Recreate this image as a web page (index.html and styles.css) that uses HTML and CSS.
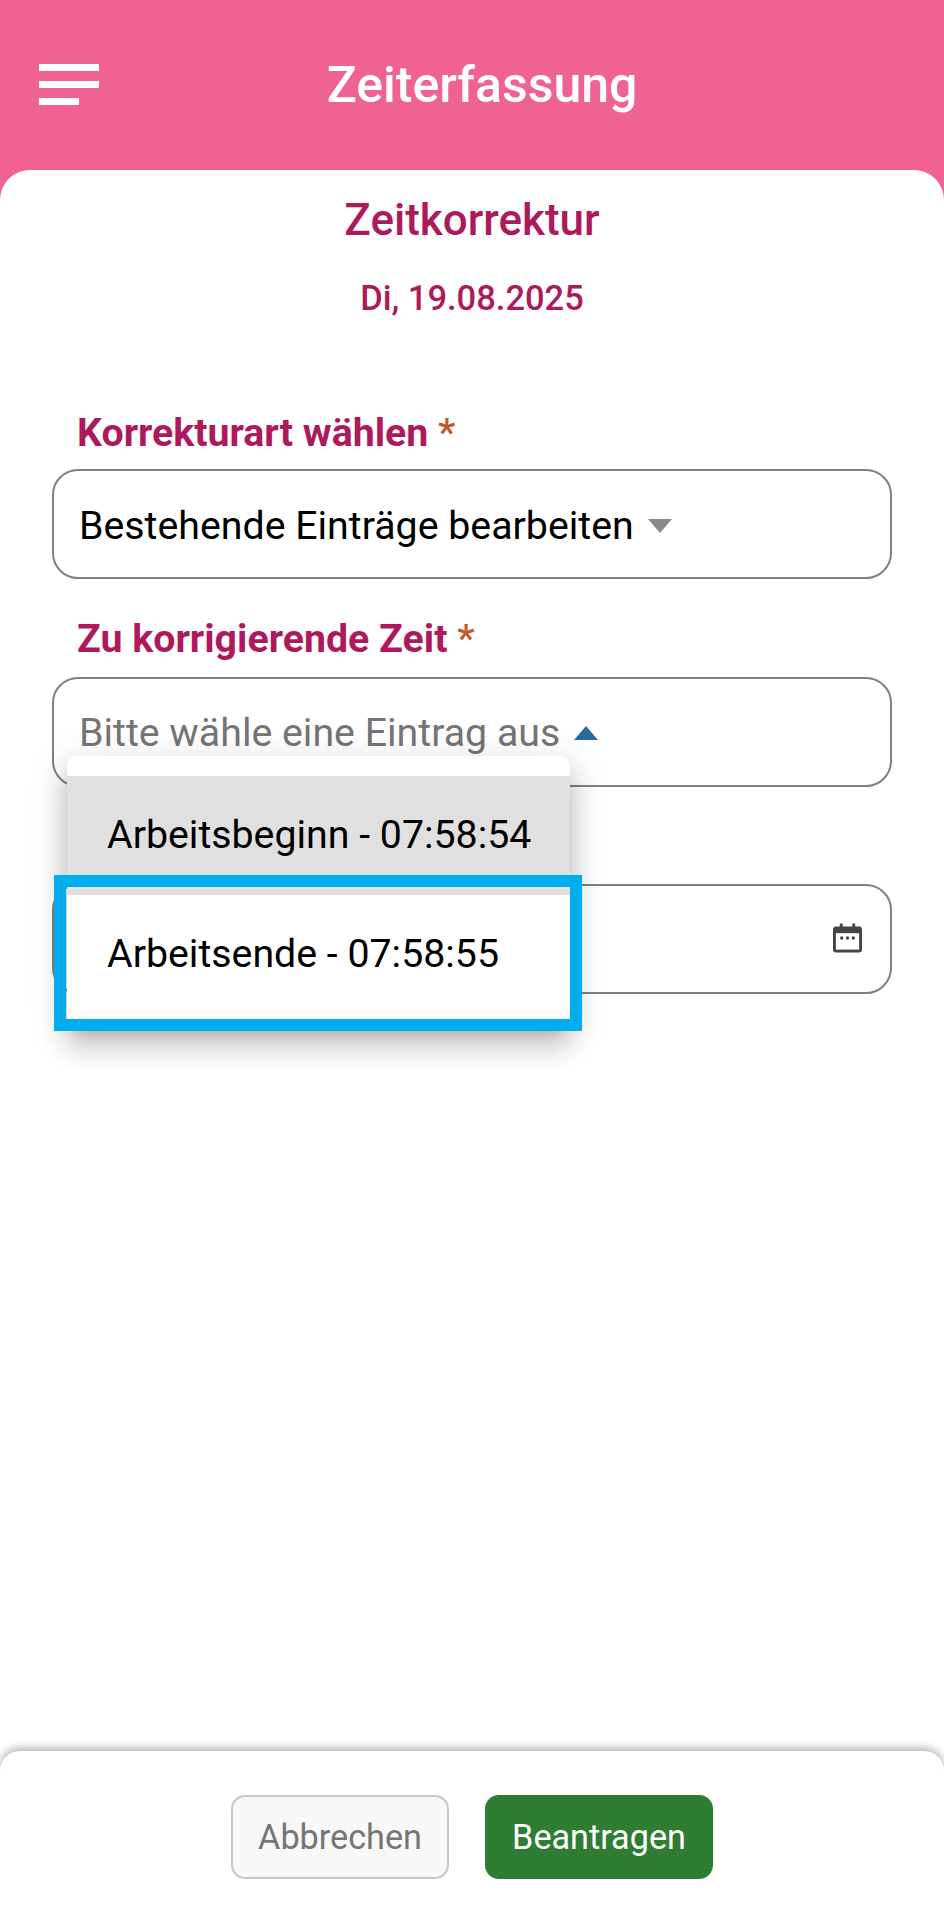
FILE: index.html
```html
<!DOCTYPE html>
<html lang="de">
<head>
<meta charset="utf-8">
<title>Zeiterfassung</title>
<link rel="stylesheet" href="styles.css">
</head>
<body>
<div class="app">
  <header class="topbar">
    <div class="burger"><span class="bar"></span><span class="bar"></span><span class="bar short"></span></div>
    <h1 class="app-title">Zeiterfassung</h1>
  </header>
  <main class="sheet">
    <h2 class="sheet-title">Zeitkorrektur</h2>
    <p class="sheet-date">Di, 19.08.2025</p>
    <form class="form">
      <div class="group">
        <div class="label">Korrekturart wählen <span class="req">*</span></div>
        <div class="field">
          <span class="value">Bestehende Einträge bearbeiten</span>
          <svg class="caret" viewBox="0 0 24 14"><polygon points="0,0 24,0 12,14" fill="#8a8a8a"/></svg>
        </div>
      </div>
      <div class="group">
        <div class="label">Zu korrigierende Zeit <span class="req">*</span></div>
        <div class="field">
          <span class="value placeholder">Bitte wähle eine Eintrag aus</span>
          <svg class="caret caret-open" viewBox="0 0 24 14"><polygon points="0,14 24,14 12,0" fill="#2a6b9c"/></svg>
        </div>
        <div class="menu">
          <div class="menu-item active">Arbeitsbeginn - 07:58:54</div>
          <div class="menu-item">Arbeitsende - 07:58:55</div>
          <div class="highlight"></div>
        </div>
      </div>
      <div class="group no-label">
        <div class="field end">
          <svg class="calendar" viewBox="0 0 30 30">
            <path fill="#444" d="M7 0h3v3h10V0h3v3h3.500A3 3 0 0 1 30 6v21a3 3 0 0 1-3 3H3a3 3 0 0 1-3-3V6a3 3 0 0 1 3-3h4z"/>
            <rect x="3" y="10" width="24" height="17" fill="#fff"/>
            <circle cx="9" cy="15" r="1.700" fill="#444"/><circle cx="15" cy="15" r="1.700" fill="#444"/><circle cx="21" cy="15" r="1.700" fill="#444"/>
          </svg>
        </div>
      </div>
    </form>
    <footer class="actions">
      <button type="button" class="btn btn-ghost">Abbrechen</button>
      <button type="button" class="btn btn-primary">Beantragen</button>
    </footer>
  </main>
</div>
</body>
</html>
```
FILE: styles.css
```css
* { box-sizing: border-box; }
html, body { margin: 0; padding: 0; }
body { font-family: Roboto, "Noto Sans", sans-serif; background: #fff; }
.app { width: 944px; height: 1920px; display: flex; flex-direction: column; background: #f06292; overflow: hidden; }
.topbar { height: 170px; flex: none; display: flex; align-items: flex-start; justify-content: center; position: relative; }
.burger { position: absolute; left: 39px; top: 64px; display: flex; flex-direction: column; gap: 10px; width: 60px; }
.bar { display: block; height: 7px; width: 60px; background: #fff; }
.bar.short { width: 40px; }
.app-title { margin: 55px 0 0 20px; color: #fff; font-size: 50px; font-weight: 500; line-height: 60px; }
.sheet { flex: 1; background: #fff; border-radius: 30px 30px 0 0; display: flex; flex-direction: column; min-height: 0; }
.sheet-title { margin: 25px 0 0; text-align: center; color: #ad1a5c; font-size: 44px; font-weight: 500; line-height: 50px; }
.sheet-date { margin: 33px 0 0; text-align: center; color: #ad1a5c; font-size: 34.500px; font-weight: 500; line-height: 40px; }
.form { padding: 0 52px; margin-top: 93px; display: flex; flex-direction: column; gap: 38px; }
.group { position: relative; }
.label { color: #ad1a5c; font-size: 39.300px; font-weight: 700; line-height: 44px; padding-left: 25px; margin-bottom: 14px; }
.group + .group .label { margin-bottom: 16px; }
.req { color: #bf5a2c; font-weight: 500; }
.field { height: 110px; border: 2px solid #808080; border-radius: 26px; padding: 0 25px; display: flex; align-items: center; gap: 14px; }
.field.end { justify-content: flex-end; padding-right: 28px; }
.value { font-size: 39.300px; color: #000; line-height: 50px; padding-top: 4px; }
.placeholder { color: #757575; padding-top: 2px; }
.caret { width: 24px; height: 14px; flex: none; margin-top: 4px; }
.caret-open { margin-top: 2px; }
.calendar { width: 29px; height: 30px; margin-bottom: 2px; }
.no-label { padding-top: 59px; }
.menu { position: absolute; z-index: 2; left: 15px; top: 139px; width: 503px; background: #fff; border-radius: 10px; padding: 20px 0 12px; box-shadow: 0 13px 13px -8px rgba(0,0,0,.2), 0 21px 26px 3px rgba(0,0,0,.14), 0 8px 36px 5px rgba(0,0,0,.12); }
.menu-item { height: 119px; padding: 0 0 2px 40px; display: flex; align-items: center; font-size: 39.300px; color: #000; }
.menu-item.active { background: #e0e0e0; }
.highlight { position: absolute; left: -13px; right: -12px; top: 119px; height: 156px; border: 12px solid #00aeef; }
.actions { margin-top: auto; height: 169px; flex: none; background: #fff; border-radius: 20px 20px 0 0; box-shadow: 0 -3px 8px rgba(0,0,0,.3); display: flex; justify-content: center; align-items: flex-start; gap: 36px; padding-top: 44px; }
.btn { height: 84px; border-radius: 14px; font-family: inherit; font-size: 34.200px; padding: 0; }
.btn-ghost { width: 218px; background: #f8f8f8; border: 2px solid #c8c8c8; color: #757575; }
.btn-primary { width: 228px; background: #2e7d32; border: none; color: #fff; }
```
